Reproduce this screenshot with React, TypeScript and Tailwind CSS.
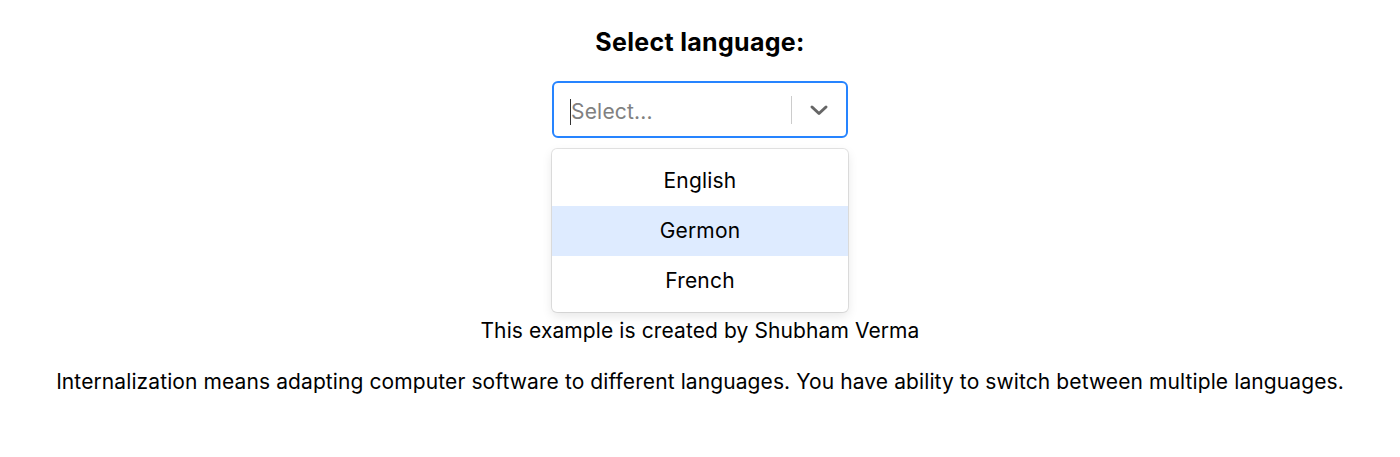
import React from "react"

const options = ["English", "Germon", "French"]

export default function App() {
  return (
    <div className="w-full min-h-screen bg-white text-black font-['Inter','Noto_Sans',sans-serif] flex flex-col items-center">
      <h2 className="mt-[26px] text-[25px] leading-[32px] font-bold tracking-[0.3px]">Select language:</h2>

      {/* select control */}
      <div className="relative mt-[23px] w-[296px]">
        <div className="h-[57px] w-full rounded-[6px] border-2 border-[#2684FF] bg-white flex items-center">
          <div className="flex-1 flex items-center pl-[16px] pt-[4px]">
            <span className="w-px h-[26px] bg-[#333]" />
            <span className="text-[21px] text-[#808080] tracking-[0.2px]">Select...</span>
          </div>
          <span className="w-px h-[28px] bg-[#ccc]" />
          <div className="w-[54px] flex items-center justify-center">
            <svg width="20" height="12" viewBox="0 0 20 12" fill="none">
              <path d="M3 3 L10 9.5 L17 3" stroke="#666" strokeWidth="3" strokeLinecap="round" strokeLinejoin="round" />
            </svg>
          </div>
        </div>

        {/* open menu, lies over the page */}
        <div className="absolute left-0 top-[68px] w-full rounded-[5px] bg-white pt-[7px] pb-[6px] shadow-[0_0_0_1px_rgba(0,0,0,0.1),0_4px_11px_rgba(0,0,0,0.1)] z-10">
          {options.map((o, i) => (
            <div
              key={o}
              className={`h-[50px] flex items-center justify-center text-[21px] tracking-[0.2px] ${i === 1 ? "bg-[#DEEBFF]" : ""}`}
            >
              {o}
            </div>
          ))}
        </div>
      </div>

      <p className="mt-[180px] text-[21px] leading-[26px] tracking-[0.1px]">This example is created by Shubham Verma</p>
      <p className="mt-[25px] text-[21px] leading-[26px] tracking-[0.1px]">
        Internalization means adapting computer software to different languages. You have ability to switch between multiple languages.
      </p>
    </div>
  )
}
